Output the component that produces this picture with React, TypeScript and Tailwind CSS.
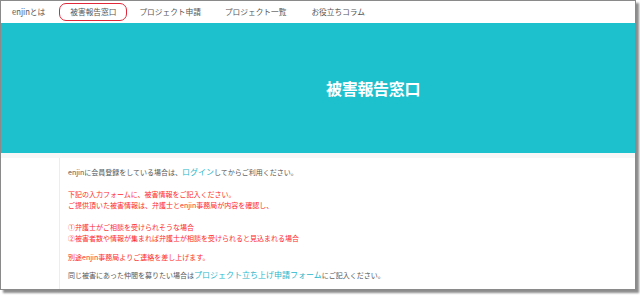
const font = { fontFamily: '"Noto Sans CJK JP", "Noto Sans", sans-serif' };

export default function App() {
  const navItems = [
    { label: "enjinとは", cls: "ml-[11px]" },
    { label: "被害報告窓口", cls: "ml-[14px] px-[10px] border border-[#e0283a] rounded-[7px]" },
    { label: "プロジェクト申請", cls: "ml-[12px]" },
    { label: "プロジェクト一覧", cls: "ml-[24px]" },
    { label: "お役立ちコラム", cls: "ml-[25px]" },
  ];

  return (
    <div className="w-[640px] h-[296px] bg-white overflow-hidden" style={font}>
      <div className="w-[636px] h-[290px] border border-[#8a8a8a] shadow-[3px_3px_2px_rgba(0,0,0,0.45)] bg-white overflow-hidden flex flex-col">
        {/* Nav */}
        <nav className="h-[22px] flex items-center text-[7.7px] text-[#555] bg-white">
          {navItems.map((item, i) => (
            <span key={i} className={`h-[18px] flex items-center leading-none ${item.cls}`}>
              {item.label}
            </span>
          ))}
        </nav>

        {/* Hero */}
        <div className="h-[130px] bg-[#1dc1ce] flex items-center pl-[325px]">
          <h1 className="text-white font-bold text-[16px] leading-none tracking-[-0.3px]">被害報告窓口</h1>
        </div>
        <div className="h-[5px] bg-[#f7f7f7]" />

        {/* Content */}
        <div className="flex-1 pl-[58px] pr-[58px]">
          <div className="h-full border-l border-[#ededed] pl-[8px] pt-[8px] text-[7px] leading-[11.5px] text-[#555]">
            <p>
              enjinに会員登録をしている場合は、<span className="text-[#2bb6c9] text-[8px]">ログイン</span>してからご利用ください。
            </p>
            <div className="mt-[10px] text-[#ff2a2a]">
              <p>下記の入力フォームに、被害情報をご記入ください。</p>
              <p>ご提供頂いた被害情報は、弁護士とenjin事務局が内容を確認し、</p>
            </div>
            <div className="mt-[10px] text-[#ff2a2a]">
              <p>①弁護士がご相談を受けられそうな場合</p>
              <p>②被害者数や情報が集まれば弁護士が相談を受けられると見込まれる場合</p>
            </div>
            <p className="mt-[7px] text-[#ff2a2a]">別途enjin事務局よりご連絡を差し上げます。</p>
            <p className="mt-[6px]">
              同じ被害にあった仲間を募りたい場合は<span className="text-[#2bb6c9] text-[8px]">プロジェクト立ち上げ申請フォーム</span>にご記入ください。
            </p>
          </div>
        </div>
      </div>
    </div>
  );
}
